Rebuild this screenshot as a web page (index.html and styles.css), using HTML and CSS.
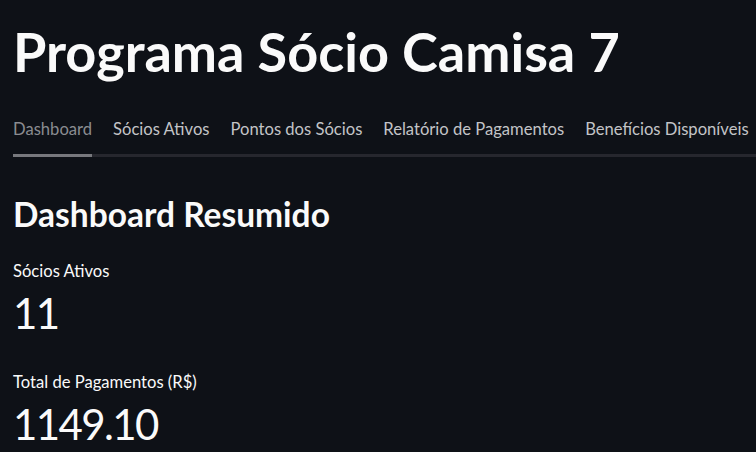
FILE: index.html
```html
<!DOCTYPE html>
<html lang="pt-BR">
<head>
<meta charset="utf-8">
<title>Programa Sócio Camisa 7</title>
<link rel="stylesheet" href="styles.css">
</head>
<body>
<main class="page">
  <h1 class="title">Programa Sócio Camisa 7</h1>
  <nav class="tabs">
    <div class="tab active">Dashboard</div>
    <div class="tab">Sócios Ativos</div>
    <div class="tab">Pontos dos Sócios</div>
    <div class="tab">Relatório de Pagamentos</div>
    <div class="tab">Benefícios Disponíveis</div>
  </nav>
  <section class="panel">
    <h3 class="subheader">Dashboard Resumido</h3>
    <div class="metric">
      <div class="metric-label">Sócios Ativos</div>
      <div class="metric-value">11</div>
    </div>
    <div class="metric">
      <div class="metric-label">Total de Pagamentos (R$)</div>
      <div class="metric-value">1149.10</div>
    </div>
  </section>
</main>
</body>
</html>
```

FILE: styles.css
```css
html, body {
  margin: 0;
  padding: 0;
  background: #0e1117;
  color: #fafafa;
  font-family: Lato, "Noto Sans", sans-serif;
  overflow: hidden;
}
.page {
  padding-left: 13px;
}
.title {
  margin: 19px 0 0;
  font-size: 54px;
  line-height: 65px;
  font-weight: 700;
  white-space: nowrap;
}
.tabs {
  display: flex;
  gap: 21px;
  margin-top: 35px;
  border-bottom: 3px solid #26272e;
  white-space: nowrap;
}
.tab {
  font-size: 16.6px;
  line-height: 20px;
  padding-bottom: 15px;
  margin-bottom: -3px;
  border-bottom: 3px solid transparent;
  color: #c3c4c7;
}
.tab.active {
  color: #8a8c91;
  border-bottom-color: #77787d;
}
.subheader {
  margin: 37px 0 0;
  font-size: 33.5px;
  line-height: 40px;
  font-weight: 700;
}
.metric {
  margin-top: 27px;
}
.metric + .metric {
  margin-top: 34px;
}
.metric-label {
  font-size: 16.6px;
  line-height: 20px;
}
.metric-value {
  margin-top: 7px;
  font-size: 42px;
  line-height: 50px;
  letter-spacing: -1.6px;
}
```
